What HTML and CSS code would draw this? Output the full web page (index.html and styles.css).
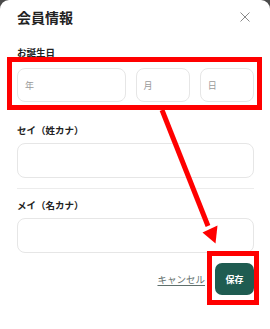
FILE: index.html
```html
<!DOCTYPE html>
<html lang="ja">
<head>
<meta charset="utf-8">
<link rel="stylesheet" href="styles.css">
</head>
<body>
<div class="dialog">
  <div class="header">
    <h1 class="title">会員情報</h1>
    <button class="close" aria-label="close">
      <svg width="10" height="10" viewBox="0 0 10 10"><path d="M0.5 0.5L9.5 9.5M9.5 0.5L0.5 9.5" stroke="#8a8a8a" stroke-width="1" fill="none"/></svg>
    </button>
  </div>
  <div class="label label-birth">お誕生日</div>
  <div class="birth-row">
    <div class="input"><span class="ph">年</span></div>
    <div class="input"><span class="ph">月</span></div>
    <div class="input"><span class="ph">日</span></div>
  </div>
  <div class="label label-sei">セイ（姓カナ）</div>
  <div class="input input-full"></div>
  <div class="divider"></div>
  <div class="label label-mei">メイ（名カナ）</div>
  <div class="input input-full"></div>
  <div class="actions">
    <a class="cancel">キャンセル</a>
    <button class="save">保存</button>
  </div>
</div>
<svg class="annot" width="270" height="329" viewBox="0 0 270 329">
  <rect x="9.5" y="59.5" width="250" height="48" fill="none" stroke="#ff0000" stroke-width="5"/>
  <rect x="209.5" y="253.5" width="47" height="49" fill="none" stroke="#ff0000" stroke-width="5"/>
  <line x1="162" y1="110" x2="208" y2="226" stroke="#ff0000" stroke-width="5"/>
  <polygon points="202.5,232.5 217.5,225.5 215.5,243.5" fill="#ff0000"/>
</svg>
</body>
</html>
```
FILE: styles.css
```css
html, body {
  margin: 0;
  padding: 0;
}
body {
  background: #4a4a4a;
  width: 270px;
  height: 329px;
  overflow: hidden;
  position: relative;
  font-family: "Noto Sans CJK JP", "Noto Sans", sans-serif;
  color: #222;
}
.dialog {
  background: #fff;
  border-radius: 9px 9px 0 0;
  height: 329px;
  padding: 0 16px 0 17px;
  box-sizing: border-box;
  display: flex;
  flex-direction: column;
}
.header {
  height: 32px;
  display: flex;
  align-items: center;
  justify-content: space-between;
}
.title {
  margin: 0;
  font-size: 14px;
  font-weight: 700;
  line-height: 16px;
  color: #222;
  padding-top: 1px;
}
.close {
  background: none;
  border: 0;
  padding: 0;
  width: 10px;
  height: 10px;
  margin-right: 4px;
  margin-top: 1px;
  display: flex;
}
.label {
  font-size: 9.5px;
  font-weight: 700;
  line-height: 14px;
  height: 14px;
  color: #222;
}
.label-birth { margin-top: 13px; }
.label-sei { margin-top: 21px; }
.label-mei { margin-top: 9px; }
.birth-row {
  margin-top: 9px;
  display: grid;
  grid-template-columns: 2fr 1fr 1fr;
  gap: 10px;
}
.input {
  height: 34px;
  border: 1px solid #e6e6e6;
  border-radius: 8px;
  box-sizing: border-box;
  display: flex;
  align-items: center;
  padding-left: 7px;
}
.ph {
  font-size: 9px;
  color: #9a9a9a;
}
.input-full {
  height: 35px;
  margin-top: 6px;
}
.divider {
  margin-top: 10px;
  height: 1px;
  background: #ececec;
}
.actions {
  margin-top: 10px;
  display: flex;
  justify-content: flex-end;
  align-items: center;
  gap: 10px;
}
.cancel {
  font-size: 9.5px;
  color: #5f6f6c;
  text-decoration: underline;
  text-underline-offset: 2px;
  line-height: 14px;
}
.save {
  width: 39px;
  height: 32px;
  border: 0;
  border-radius: 7px;
  background: #1f5c51;
  color: #fff;
  font-family: "Noto Sans CJK JP", sans-serif;
  font-size: 9px;
  font-weight: 700;
  padding: 0;
  margin-right: 0;
}
.annot {
  position: absolute;
  left: 0;
  top: 0;
  pointer-events: none;
}
```
